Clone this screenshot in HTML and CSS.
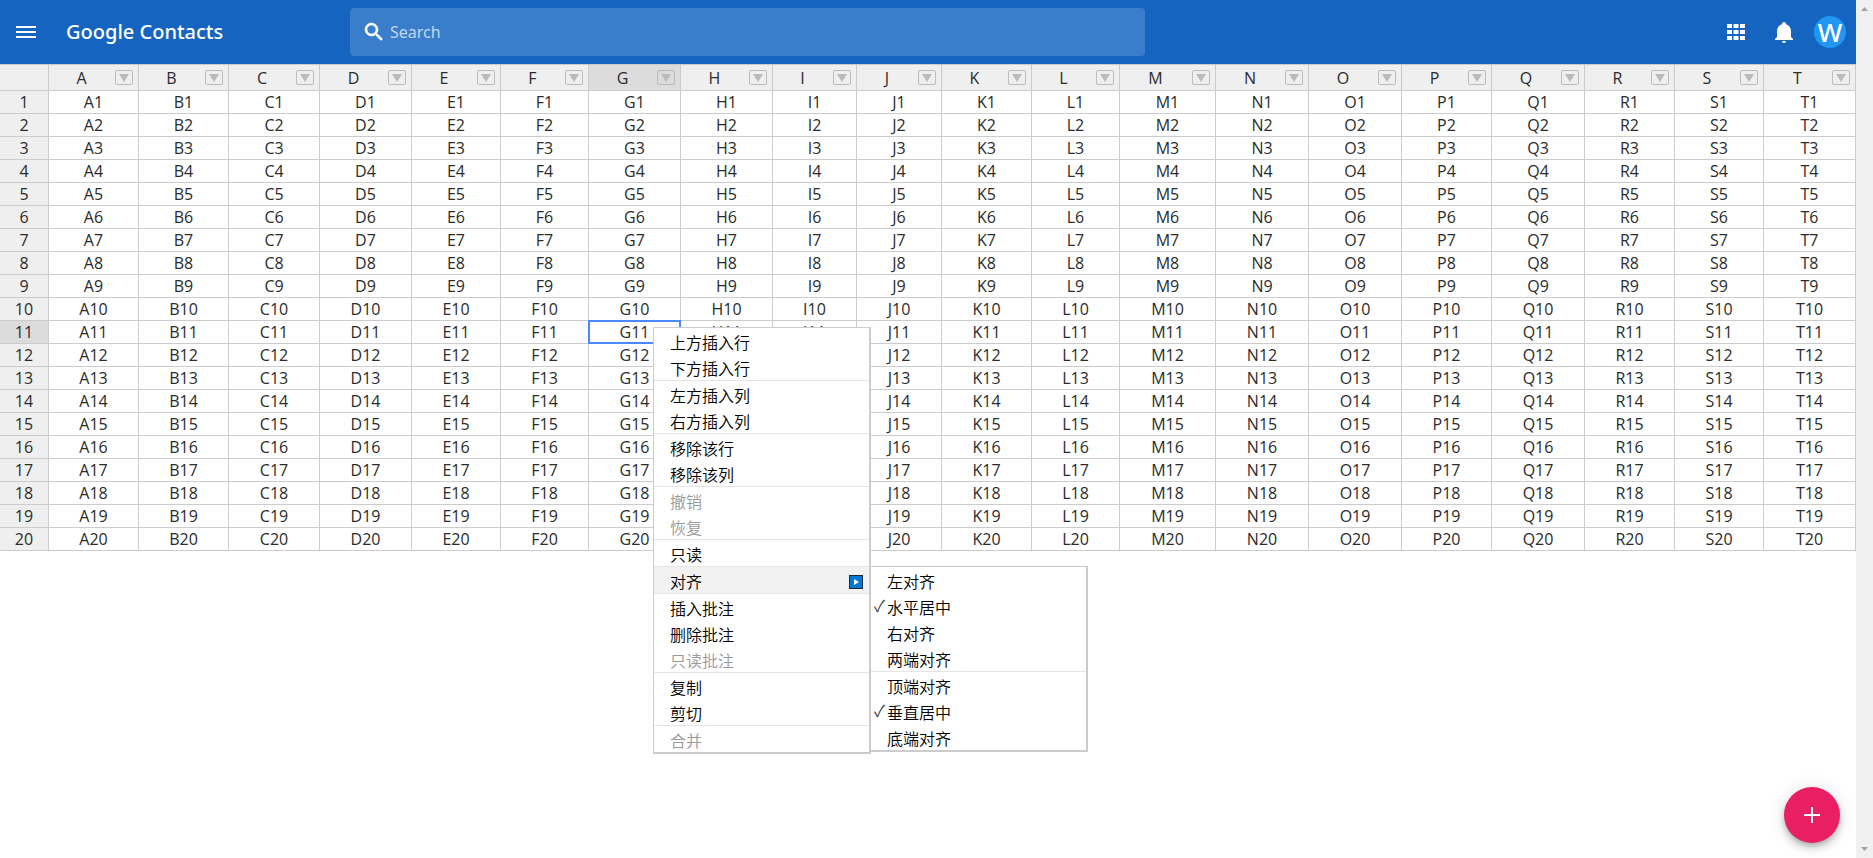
FILE: index.html
```html
<!DOCTYPE html>
<html lang="zh-CN">
<head>
<meta charset="utf-8">
<title>Google Contacts</title>
<link rel="stylesheet" href="styles.css">
</head>
<body>
<div class="app">
  <header class="toolbar">
    <button class="icon-button" type="button" aria-label="Menu">
      <svg class="icon" viewBox="0 0 24 24"><path d="M2 6h20v2H2zM2 11h20v2H2zM2 16h20v2H2z"/></svg>
    </button>
    <h1 class="title">Google Contacts</h1>
    <label class="search">
      <svg class="icon search-icon" viewBox="0 0 24 24"><path d="M9.500 3A6.500 6.500 0 0 1 16 9.500c0 1.610-.590 3.090-1.560 4.230l.270.270h.790l5 5-1.500 1.500-5-5v-.790l-.270-.270A6.516 6.516 0 0 1 9.500 16a6.500 6.500 0 0 1 0-13m0 2C7 5 5 7 5 9.500S7 14 9.500 14 14 12 14 9.500 12 5 9.500 5z"/></svg>
      <input class="search-input" type="text" placeholder="Search" aria-label="Search">
    </label>
    <nav class="actions">
      <button class="icon-button" type="button" aria-label="Apps">
        <svg class="icon" viewBox="0 0 24 24"><path d="M3 4h5v4H3zM9.500 4h5v4h-5zM16 4h5v4h-5zM3 10h5v4H3zM9.500 10h5v4h-5zM16 10h5v4h-5zM3 16h5v4H3zM9.500 16h5v4h-5zM16 16h5v4h-5z"/></svg>
      </button>
      <button class="icon-button" type="button" aria-label="Notifications">
        <svg class="icon" viewBox="0 0 24 24"><path d="M21 19v1H3v-1l2-2v-6c0-3.100 2.030-5.830 5-6.710V4a2 2 0 0 1 4 0v.290c2.970.880 5 3.610 5 6.710v6l2 2m-7 2a2 2 0 0 1-4 0"/></svg>
      </button>
      <button class="avatar" type="button" aria-label="Account">W</button>
    </nav>
  </header>

  <main class="sheet">
    <table class="grid" id="grid"></table>

    <ul class="menu context-menu">
      <li class="item">上方插入行</li>
      <li class="item">下方插入行</li>
      <li class="item divided">左方插入列</li>
      <li class="item">右方插入列</li>
      <li class="item divided">移除该行</li>
      <li class="item">移除该列</li>
      <li class="item divided disabled">撤销</li>
      <li class="item disabled">恢复</li>
      <li class="item divided">只读</li>
      <li class="item divided active">对齐
        <svg class="submenu-arrow" viewBox="0 0 14 14"><path fill="#1b2b3a" d="M0 0h14v14H0z"/><path fill="#0078d7" d="M1 1h12v12H1z"/><path fill="#fff" d="M5 4v6l5-3z"/></svg>
        <ul class="menu submenu">
          <li class="item">左对齐</li>
          <li class="item checked">水平居中</li>
          <li class="item">右对齐</li>
          <li class="item">两端对齐</li>
          <li class="item divided">顶端对齐</li>
          <li class="item checked">垂直居中</li>
          <li class="item">底端对齐</li>
        </ul>
      </li>
      <li class="item divided">插入批注</li>
      <li class="item">删除批注</li>
      <li class="item disabled">只读批注</li>
      <li class="item divided">复制</li>
      <li class="item">剪切</li>
      <li class="item divided disabled">合并</li>
    </ul>
  </main>

  <button class="fab" type="button" aria-label="Add">
    <svg class="icon" viewBox="0 0 24 24"><path d="M20 13h-7v7h-2v-7H4v-2h7V4h2v7h7z"/></svg>
  </button>
</div>
<div class="scrollbar" aria-hidden="true">
  <svg class="scroll-arrow" viewBox="0 0 17 17"><path d="M5 11h7L8.500 7z"/></svg>
  <svg class="scroll-arrow" viewBox="0 0 17 17"><path d="M5 6h7l-3.500 4z"/></svg>
</div>
<script src="grid.js"></script>
</body>
</html>
```
FILE: styles.css
```css
* {
  box-sizing: border-box;
}

body {
  margin: 0;
  display: flex;
  min-height: 100vh;
  background: #fff;
  color: #2b2b2b;
  font-family: "Open Sans", "Noto Sans", "Noto Sans CJK SC", sans-serif;
  font-size: 16px;
}

button {
  padding: 0;
  border: 0;
  background: none;
  color: inherit;
  font: inherit;
  cursor: pointer;
}

.app {
  flex: 1;
  min-width: 0;
}

.toolbar {
  display: flex;
  align-items: center;
  height: 64px;
  padding: 0 10px 0 8px;
  background: #1565c0;
  color: #fff;
  font-family: "Noto Sans", "Open Sans", sans-serif;
}

.icon-button {
  display: grid;
  place-items: center;
  width: 36px;
  height: 36px;
}

.icon {
  display: block;
  flex: none;
  width: 24px;
  height: 24px;
  fill: currentColor;
}

.search-icon {
  stroke: currentColor;
  stroke-width: 0.6;
}

.title {
  width: 284px;
  margin: 0 0 0 22px;
  font-size: 20px;
  font-weight: 500;
  line-height: 28px;
}

.search {
  display: flex;
  align-items: center;
  width: 795px;
  height: 48px;
  padding: 0 12px;
  gap: 4px;
  border-radius: 4px;
  background: rgba(255, 255, 255, 0.16);
}

.search-input {
  flex: 1;
  min-width: 0;
  padding: 0;
  border: 0;
  outline: 0;
  background: none;
  color: #fff;
  font: inherit;
}

.search-input::placeholder {
  color: rgba(255, 255, 255, 0.7);
}

.actions {
  display: flex;
  align-items: center;
  gap: 12px;
  margin-left: auto;
}

.avatar {
  width: 32px;
  height: 32px;
  border-radius: 50%;
  background: #2196f3;
  font-size: 26px;
  font-weight: 500;
  line-height: 32px;
}

.sheet {
  position: relative;
}

.grid {
  width: 100%;
  table-layout: fixed;
  border-collapse: separate;
  border-spacing: 0;
}

.grid th,
.grid td {
  height: 23px;
  padding: 0;
  border: solid #ccc;
  border-width: 0 1px 1px 0;
  font-weight: 400;
  line-height: 22px;
  text-align: center;
}

.grid th {
  background: #efefef;
}

.grid thead th {
  height: 27px;
  border-top-width: 1px;
}

.grid th.current {
  background: #dcdcdc;
}

.grid td.selected {
  position: relative;
}

.grid td.selected::after {
  content: "";
  position: absolute;
  inset: -1px;
  border: 2px solid #4b89ff;
}

.column-head {
  display: flex;
  align-items: center;
  gap: 1px;
  padding-right: 5px;
}

.column-name {
  flex: 1;
}

.filter {
  display: grid;
  place-items: center;
  width: 18px;
  height: 15px;
  border: 1px solid #bbb;
  border-radius: 2px;
  color: #bbb;
}

.filter svg {
  width: 10px;
  height: 8px;
  fill: currentColor;
}

.menu {
  position: absolute;
  width: 218px;
  margin: 0;
  padding: 0;
  border: 1px solid #ccc;
  border-right-width: 2px;
  border-bottom-width: 2px;
  background: #fff;
  color: #000;
  list-style: none;
}

.context-menu {
  top: 263px;
  left: 653px;
}

.submenu {
  top: -1px;
  left: calc(100% + 1px);
}

.item {
  position: relative;
  padding: 3px 16px 1px;
  font-family: "Noto Sans CJK SC", sans-serif;
  font-weight: 350;
  line-height: 22px;
}

.divided {
  border-top: 1px solid #e5e5e5;
}

.disabled {
  color: #999;
}

.active {
  background: #f2f2f2;
}

.checked::before {
  content: "✓";
  position: absolute;
  left: 3px;
  color: #444;
  font-family: "DejaVu Sans", sans-serif;
}

.submenu-arrow {
  position: absolute;
  top: 8px;
  right: 6px;
  width: 14px;
  height: 14px;
}

.fab {
  position: fixed;
  right: 33px;
  bottom: 15px;
  display: grid;
  place-items: center;
  width: 56px;
  height: 56px;
  border-radius: 50%;
  background: #e91e63;
  color: #fff;
  box-shadow: 0 3px 5px -1px rgba(0, 0, 0, 0.2), 0 6px 10px rgba(0, 0, 0, 0.14), 0 1px 18px rgba(0, 0, 0, 0.12);
}

.scrollbar {
  display: flex;
  flex-direction: column;
  justify-content: space-between;
  width: 17px;
  background: #f0f0f0;
}

.scroll-arrow {
  width: 17px;
  height: 17px;
  fill: #a3a3a3;
}
```
FILE: grid.js
```js
const columnWidths = [90, 90, 91, 92, 89, 88, 92, 92, 84, 85, 90, 88, 96, 93, 93, 90, 93, 90, 89, 92];
const rowHeadWidth = 49;
const rowCount = 20;
const selected = { column: "G", row: 11 };

const names = columnWidths.map((_, i) => String.fromCharCode(65 + i));
const current = (on) => (on ? ' class="current"' : "");

const cols = [rowHeadWidth, ...columnWidths].map((w) => `<col style="width:${w}px">`).join("");

const head = names.map((name) => `
  <th scope="col"${current(name === selected.column)}>
    <div class="column-head">
      <span class="column-name">${name}</span>
      <button class="filter" type="button" aria-label="Filter ${name}"><svg viewBox="0 0 10 8"><path d="M0 0h10L5 8z"/></svg></button>
    </div>
  </th>`).join("");

let body = "";
for (let row = 1; row <= rowCount; row++) {
  const cells = names.map((name) => {
    const isSelected = name === selected.column && row === selected.row;
    return `<td${isSelected ? ' class="selected"' : ""}>${name}${row}</td>`;
  }).join("");
  body += `<tr><th scope="row"${current(row === selected.row)}>${row}</th>${cells}</tr>`;
}

document.getElementById("grid").innerHTML =
  `<colgroup>${cols}</colgroup><thead><tr><th></th>${head}</tr></thead><tbody>${body}</tbody>`;
```
